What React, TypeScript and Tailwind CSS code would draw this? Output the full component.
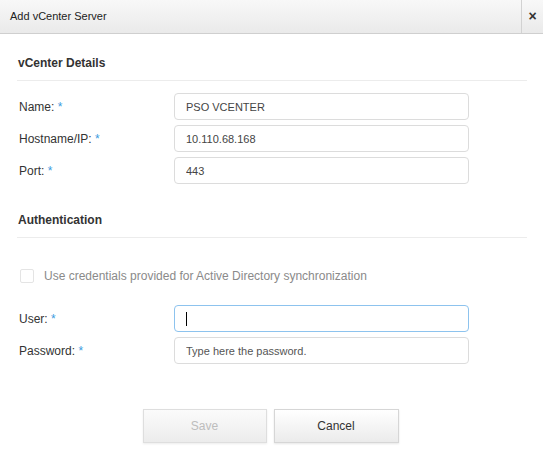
import React from 'react'

const fields = [
  { label: 'Name:', value: 'PSO VCENTER' },
  { label: 'Hostname/IP:', value: '10.110.68.168' },
  { label: 'Port:', value: '443' },
]

function Label({ text }: { text: string }) {
  return (
    <label className="w-[157px] shrink-0 pl-[2px] text-[12px] text-[#333]">
      {text} <span className="text-[#3b9be0]">*</span>
    </label>
  )
}

function SectionTitle({ children }: { children: React.ReactNode }) {
  return (
    <h2 className="border-b border-[#ececec] pb-[10px] pl-px text-[12px] font-bold leading-[14px] text-[#333]">
      {children}
    </h2>
  )
}

export default function App() {
  return (
    <div className="h-[461px] w-[543px] overflow-hidden bg-white font-['Liberation_Sans',Arial,sans-serif] text-[#333]">
      <div className="flex h-[34px] border-b border-[#cfcfcf] bg-gradient-to-b from-[#f8f8f8] to-[#eaeaea]">
        <div className="flex flex-1 items-center pl-[10px] text-[11px] text-[#222]">Add vCenter Server</div>
        <button className="flex w-[22px] items-center justify-center border-l border-[#d2d2d2] text-[14px] font-bold text-[#333]">
          ×
        </button>
      </div>

      <div className="pl-[17px] pr-[16px] pt-[22px]">
        <SectionTitle>vCenter Details</SectionTitle>

        <div className="mt-[12px] flex flex-col gap-[5px]">
          {fields.map((f) => (
            <div key={f.label} className="flex items-center">
              <Label text={f.label} />
              <input
                readOnly
                value={f.value}
                className="h-[27px] w-[295px] rounded-[4px] border border-[#dcdcdc] px-[11px] text-[11px] text-[#444] outline-none"
              />
            </div>
          ))}
        </div>

        <div className="mt-[29px]">
          <SectionTitle>Authentication</SectionTitle>
        </div>

        <div className="mt-[29px] flex items-center gap-[10px] pl-[3px]">
          <span className="h-[14px] w-[14px] rounded-[2px] border border-[#e4e4e4] bg-white" />
          <span className="text-[12px] text-[#8a8a8a]">
            Use credentials provided for Active Directory synchronization
          </span>
        </div>

        <div className="mt-[20px] flex flex-col gap-[5px]">
          <div className="flex items-center">
            <Label text="User:" />
            <div className="flex h-[27px] w-[295px] items-center rounded-[4px] border border-[#8dc3ee] px-[11px]">
              <span className="h-[14px] w-px bg-black" />
            </div>
          </div>
          <div className="flex items-center">
            <Label text="Password:" />
            <input
              readOnly
              placeholder="Type here the password."
              className="h-[27px] w-[295px] rounded-[4px] border border-[#dcdcdc] px-[11px] text-[11px] text-[#444] outline-none placeholder:text-[#555]"
            />
          </div>
        </div>
      </div>

      <div className="mt-[45px] flex justify-center gap-[7px] pr-[2px]">
        <button
          disabled
          className="h-[34px] w-[124px] border border-[#dedede] bg-gradient-to-b from-[#fbfbfb] to-[#ececec] text-[12px] text-[#bdbdbd] shadow-[0_1px_2px_rgba(0,0,0,0.08)]"
        >
          Save
        </button>
        <button className="h-[34px] w-[125px] border border-[#d6d6d6] bg-gradient-to-b from-white to-[#ebebeb] text-[12px] text-[#333] shadow-[0_1px_2px_rgba(0,0,0,0.1)]">
          Cancel
        </button>
      </div>
    </div>
  )
}
